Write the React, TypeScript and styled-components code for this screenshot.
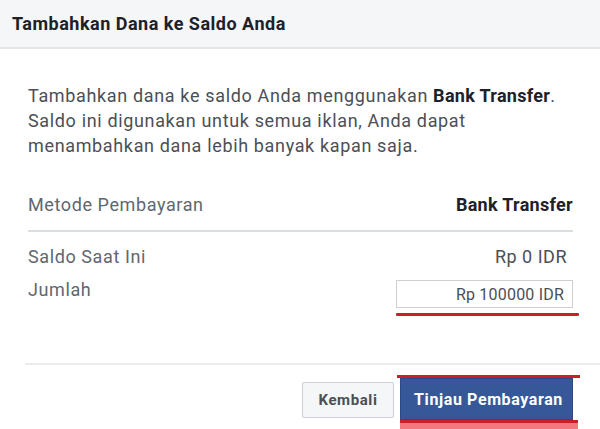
import styled, { createGlobalStyle } from "styled-components";

const GlobalStyle = createGlobalStyle`
  html, body {
    margin: 0;
    padding: 0;
    background: #ffffff;
  }
  body {
    font-family: Roboto, "Liberation Sans", Arial, sans-serif;
    color: #4b4f56;
  }
`

const Dialog = styled.div`
  width: 600px;
  height: 429px;
  overflow: hidden;
  display: flex;
  flex-direction: column;
  background: #ffffff;
`

const Header = styled.div`
  flex-shrink: 0;
  height: 47px;
  display: flex;
  align-items: center;
  padding-left: 12px;
  background: #f5f6f7;
  border-bottom: 2px solid #e3e5e8;
`

const Title = styled.h1`
  margin: 0;
  font-size: 18px;
  letter-spacing: 0.5px;
  font-weight: 700;
  color: #1d2129;
`

const Body = styled.div`
  flex-shrink: 0;
  display: flex;
  flex-direction: column;
  padding: 34px 27px 0 28px;
`

const Intro = styled.p`
  margin: 0;
  font-size: 18px;
  letter-spacing: 0.65px;
  line-height: 25px;
  color: #4b4f56;

  b {
    color: #1d2129;
    letter-spacing: 0.3px;
  }
`

const MethodRow = styled.div`
  margin-top: 22px;
  height: 50px;
  display: flex;
  align-items: center;
  justify-content: space-between;
  border-bottom: 2px solid #dadde1;
`

const Row = styled.div<{ $top: number }>`
  margin-top: ${(p) => p.$top}px;
  display: flex;
  align-items: flex-start;
  justify-content: space-between;
`

const Label = styled.span`
  font-size: 18px;
  letter-spacing: 0.6px;
  line-height: 22px;
  color: #606770;
`

const Value = styled.span<{ $bold?: boolean }>`
  font-size: 18px;
  line-height: 22px;
  letter-spacing: ${(p) => (p.$bold ? 0.3 : 0.5)}px;
  font-weight: ${(p) => (p.$bold ? 700 : 400)};
  color: ${(p) => (p.$bold ? "#1d2129" : "#4b4f56")};
  margin-right: ${(p) => (p.$bold ? 0 : 6)}px;
`

const AmountField = styled.div`
  display: flex;
  flex-direction: column;
  width: 183px;
  margin-right: -6px;
`

const AmountInput = styled.div`
  width: 177px;
  height: 28px;
  box-sizing: border-box;
  border: 1px solid #ccd0d5;
  display: flex;
  align-items: center;
  justify-content: flex-end;
  padding-right: 8px;
  font-size: 16px;
  letter-spacing: 0.2px;
  color: #4b4f56;
`

const Underline = styled.div`
  margin-top: 5px;
  height: 3px;
  background: #c8202b;
  border-radius: 1px;
`

const FooterRule = styled.div`
  margin: 47px -27px 0 -3px;
  height: 2px;
  background: #e9ebee;
`

const Actions = styled.div`
  display: flex;
  justify-content: flex-end;
  align-items: flex-start;
  gap: 3px;
  margin-top: 10px;
`

const SecondaryButton = styled.button`
  width: 92px;
  height: 36px;
  margin-top: 7px;
  padding: 0;
  border: 1px solid #ccd0d5;
  border-radius: 2px;
  background: #f5f6f7;
  font-family: inherit;
  font-size: 15px;
  letter-spacing: 0.6px;
  font-weight: 700;
  color: #4b4f56;
`

const PrimaryWrap = styled.div`
  display: flex;
  flex-direction: column;
  align-items: center;
  width: 183px;
  margin-right: -7px;

  &::before {
    content: "";
    align-self: stretch;
    height: 3px;
    background: #c8202b;
  }
  &::after {
    content: "";
    width: 178px;
    height: 12px;
    border-top: 3px solid #c8202b;
    background: #f2787e;
  }
`

const PrimaryButton = styled.button`
  width: 173px;
  height: 42px;
  padding: 0 0 0 4px;
  margin-left: -4px;
  border: 1px solid #2d4886;
  background: #365899;
  font-family: inherit;
  font-size: 16px;
  letter-spacing: 0.6px;
  font-weight: 700;
  color: #ffffff;
`

export default function App() {
  return (
    <Dialog>
      <GlobalStyle />
      <Header>
        <Title>Tambahkan Dana ke Saldo Anda</Title>
      </Header>
      <Body>
        <Intro>
          Tambahkan dana ke saldo Anda menggunakan <b>Bank Transfer</b>.
          Saldo ini digunakan untuk semua iklan, Anda dapat menambahkan dana
          lebih banyak kapan saja.
        </Intro>
        <MethodRow>
          <Label>Metode Pembayaran</Label>
          <Value $bold>Bank Transfer</Value>
        </MethodRow>
        <Row $top={14}>
          <Label>Saldo Saat Ini</Label>
          <Value>Rp 0 IDR</Value>
        </Row>
        <Row $top={12}>
          <Label style={{ marginTop: -1 }}>Jumlah</Label>
          <AmountField>
            <AmountInput>Rp 100000 IDR</AmountInput>
            <Underline />
          </AmountField>
        </Row>
        <FooterRule />
        <Actions>
          <SecondaryButton>Kembali</SecondaryButton>
          <PrimaryWrap>
            <PrimaryButton>Tinjau Pembayaran</PrimaryButton>
          </PrimaryWrap>
        </Actions>
      </Body>
    </Dialog>
  )
}
